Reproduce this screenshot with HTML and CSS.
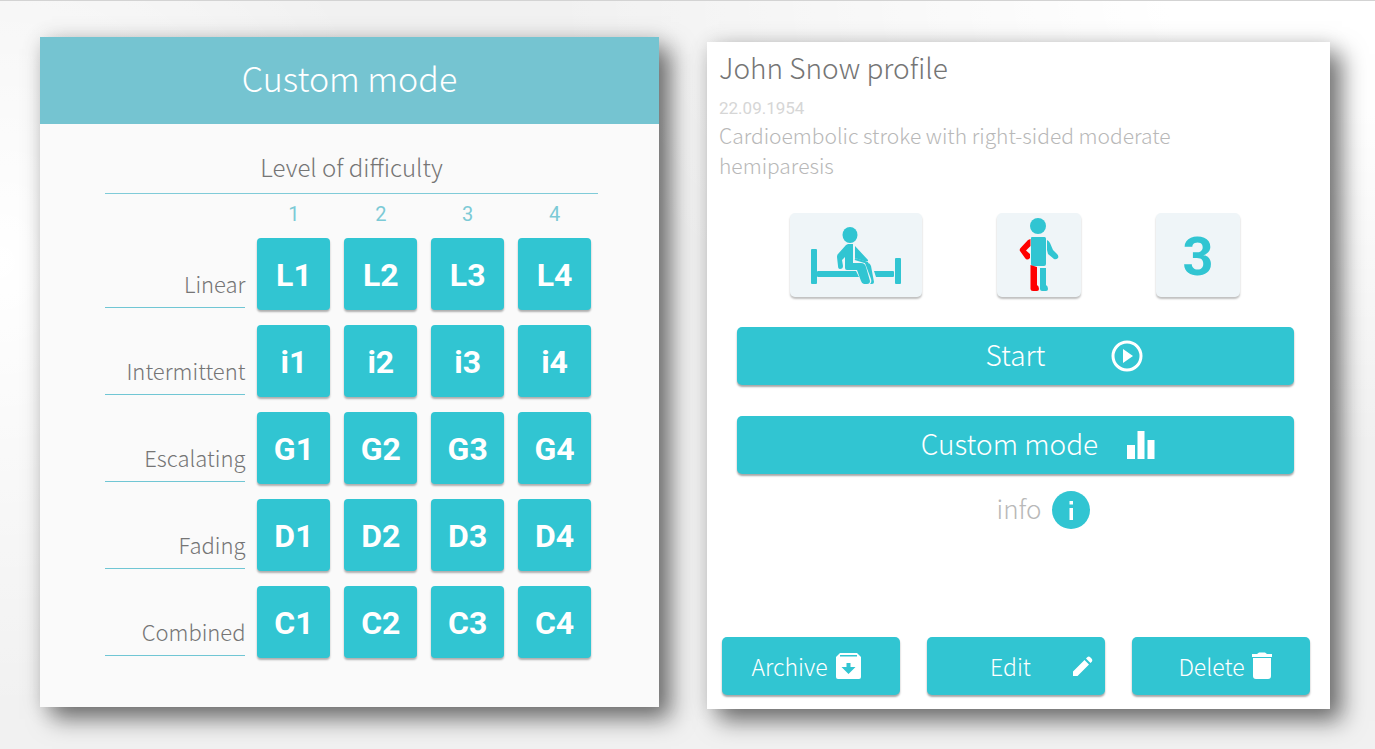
FILE: index.html
```html
<!DOCTYPE html>
<html lang="en">
<head>
<meta charset="utf-8">
<meta name="viewport" content="width=device-width, initial-scale=1">
<title>Custom mode</title>
<link rel="stylesheet" href="styles.css">
</head>
<body>
<main class="screens">
  <section class="card modes">
    <h1 class="modes-title">Custom mode</h1>
    <div class="modes-body">
      <h2 class="modes-heading">Level of difficulty</h2>
      <div class="level-grid">
        <span></span><span class="level">1</span><span class="level">2</span><span class="level">3</span><span class="level">4</span>
        <span class="mode-name">Linear</span><button class="cell">L1</button><button class="cell">L2</button><button class="cell">L3</button><button class="cell">L4</button>
        <span class="mode-name">Intermittent</span><button class="cell">i1</button><button class="cell">i2</button><button class="cell">i3</button><button class="cell">i4</button>
        <span class="mode-name">Escalating</span><button class="cell">G1</button><button class="cell">G2</button><button class="cell">G3</button><button class="cell">G4</button>
        <span class="mode-name">Fading</span><button class="cell">D1</button><button class="cell">D2</button><button class="cell">D3</button><button class="cell">D4</button>
        <span class="mode-name">Combined</span><button class="cell">C1</button><button class="cell">C2</button><button class="cell">C3</button><button class="cell">C4</button>
      </div>
    </div>
  </section>

  <section class="card profile">
    <h1 class="profile-name">John Snow profile</h1>
    <p class="birth">22.09.1954</p>
    <p class="diagnosis">Cardioembolic stroke with right-sided moderate hemiparesis</p>
    <div class="tiles">
      <div class="tile tile-wide">
        <svg width="92" height="58" viewBox="0 0 92 58" fill="#31c5d2" role="img" aria-label="Sitting on bed">
          <rect x="1" y="23" width="6" height="35" rx="1"/>
          <rect x="85" y="32" width="6" height="26" rx="1"/>
          <path d="M8 45H46L49 51H8a1 1 0 0 1-1-1V46a1 1 0 0 1 1-1zM64 45H83a1 1 0 0 1 1 1v4a1 1 0 0 1-1 1H66z"/>
          <ellipse cx="40" cy="9" rx="7.500" ry="8"/>
          <path d="M38 18H43V37H51q4 0 5 4L60 55q0 3-3 3H54q-2 0-3-3L47 44H37q-2 0-2-2V31L32 34 33 40q0 3-3 3-2 0-2-3L27 31q0-2 1-3L36 19z"/>
          <path d="M45 20L58 34V35H54L45 32zM55 37h3q2 0 3 3l3 16q0 2-2 2H60q2-2 1-5z"/>
          <path d="M45 33L58 37" fill="none" stroke="#31c5d2" stroke-width="2"/>
        </svg>
      </div>
      <div class="tile">
        <svg width="40" height="76" viewBox="0 0 40 76" fill="#31c5d2" role="img" aria-label="Right side affected">
          <ellipse cx="19" cy="9" rx="8" ry="8"/>
          <path d="M13 20H25.500q1.500 0 1.500 1.500V47q0 2-2 2H14q-2 0-2-2V21q0-1 1-1z"/>
          <path d="M28 23q2 1 3 3l3 7 4 4q2 2 1 4-2 2-4 1L29 37 28 33z"/>
          <path d="M21 51H27V68q2 1 2 4 0 2-2 2H23q-2 0-2-2z"/>
          <g fill="#f00"><path d="M11.500 22V29L7 33.500 11 37V41Q8 44 6 41L1 34q-1-1.500 1-3.500L9 23z"/><path d="M11.500 48L18 50V68q2 1 2 4 0 2-2 2H14q-2.500 0-2.500-2z"/></g>
        </svg>
      </div>
      <div class="tile tile-number">3</div>
    </div>
    <div class="actions">
      <button class="action action-start"><span class="action-label">Start</span>
        <svg width="32" height="32" viewBox="0 0 32 32" aria-hidden="true"><circle cx="16" cy="16" r="14" fill="none" stroke="#fff" stroke-width="3"/><path d="M12 9V23L22 16z" fill="#fff"/></svg>
      </button>
      <button class="action action-custom"><span class="action-label">Custom mode</span>
        <svg width="28" height="28" viewBox="0 0 28 28" fill="#fff" aria-hidden="true"><path d="M0 14h8v14H0zM10.500 0h7v28h-7zM20.500 9h7v19h-7z"/></svg>
      </button>
    </div>
    <button class="info"><span class="info-label">info</span>
      <svg width="38" height="38" viewBox="0 0 38 38" aria-hidden="true"><circle cx="19" cy="19" r="19" fill="#31c5d2"/><path d="M17.500 10h3.500v3.500h-3.500zM17.500 17h3.500v12h-3.500z" fill="#fff"/></svg>
    </button>
    <div class="footer">
      <button class="small archive">Archive
        <svg width="28" height="28" viewBox="0 0 28 28" aria-hidden="true"><path d="M5 1h17l4 4v20q0 2-2 2H3q-2 0-2-2V5z" fill="#fff"/><path d="M5 3h17v1.500H5zM11.500 11h4v4h5L13.500 22 6.500 15h5z" fill="#31c5d2"/></svg>
      </button>
      <button class="small edit"><span class="edit-label">Edit</span>
        <svg width="20" height="20" viewBox="0 0 20 20" fill="#fff" aria-hidden="true"><path d="M0 15.500L11.500 4 16 8.500 4.500 20H0zM13 2.500L14.500 1q1.500-1 3 .500l1 1q1.500 1.500.500 3L17.500 7z"/></svg>
      </button>
      <button class="small delete">Delete
        <svg width="20" height="28" viewBox="0 0 20 28" fill="#fff" aria-hidden="true"><path d="M0 2h5l2-1.500h6l2 1.500h5v3H0zM1 6h18v18q0 3-3 3H4q-3 0-3-3z"/></svg>
      </button>
    </div>
  </section>
</main>
</body>
</html>
```
FILE: styles.css
```css
* { box-sizing: border-box; }

body {
  margin: 0;
  min-height: 100vh;
  border-top: 1px solid #d3d3d3;
  background:
    radial-gradient(ellipse 30% 60% at 0 35%, #fff, rgba(255, 255, 255, 0)),
    radial-gradient(ellipse 60% 60% at 100% 0, #fff 25%, rgba(255, 255, 255, 0)),
    #f1f1f1;
  font-family: "Noto Sans CJK SC", "Open Sans", sans-serif;
  font-weight: 300;
  color: #757575;
}

h1, h2, p { margin: 0; font-weight: 300; }

button {
  border: 0;
  padding: 0;
  font: inherit;
  color: #fff;
  background: #31c5d2;
  cursor: pointer;
}

svg { display: block; flex: none; }

.screens {
  display: grid;
  grid-template-columns: 619fr 623fr;
  gap: 48px;
  align-items: start;
  padding: 36px 45px 36px 40px;
}

.card {
  box-shadow: 12px 12px 22px rgba(0, 0, 0, 0.5), 2px 2px 20px rgba(0, 0, 0, 0.15);
}

.modes { background: #fafafa; padding-bottom: 49px; }

.modes-title {
  padding: 15px 0 20px;
  background: #75c4d1;
  color: #fff;
  font-size: 34px;
  line-height: 52px;
  text-align: center;
}

.modes-body { padding: 25px 61px 0 65px; }

.modes-heading {
  padding-bottom: 8px;
  border-bottom: 1px solid #7fcbd8;
  font-size: 24px;
  line-height: 36px;
  text-align: center;
}

.level-grid {
  display: grid;
  grid-template-columns: minmax(0, 19fr) repeat(4, minmax(0, 10fr));
  column-gap: 14px;
  row-gap: 15px;
  padding: 8px 7px 0 0;
}

.level {
  height: 21px;
  font: 400 20px/24px Roboto, sans-serif;
  color: #7ccad6;
  text-align: center;
}

.mode-name {
  align-self: end;
  margin-right: -2px;
  margin-bottom: 2px;
  padding-bottom: 8px;
  border-bottom: 1px solid #70c6d4;
  font-size: 22px;
  line-height: 32px;
  text-align: right;
}

.cell {
  height: 72px;
  padding-top: 2px;
  border-radius: 4px;
  box-shadow: 0 2px 2px rgba(0, 0, 0, 0.3);
  font: 700 32px/70px Roboto, sans-serif;
}

.profile {
  display: flex;
  flex-direction: column;
  margin-top: 5px;
  padding: 2px 20px 14px 15px;
  background: #fff;
}

.profile-name { margin-left: -3px; font-size: 28px; line-height: 46px; }

.birth {
  margin: 6px 0 0 -3px;
  font: 400 17px/24px Roboto, sans-serif;
  color: #d6d6d6;
}

.diagnosis {
  max-width: 500px;
  margin-left: -3px;
  font-size: 21px;
  line-height: 30px;
  color: #b8b8b8;
}

.tiles {
  display: flex;
  justify-content: space-between;
  margin: 33px 70px 0 68px;
}

.tile {
  display: flex;
  align-items: center;
  justify-content: center;
  width: 84px;
  height: 84px;
  border-radius: 5px;
  background: #eff5f8;
  box-shadow: 0 2px 2px rgba(0, 0, 0, 0.25);
}

.tile-wide { width: 132px; }

.tile-number {
  padding-top: 3px;
  color: #31c5d2;
  font: 700 54px/81px Roboto, sans-serif;
}

.actions {
  display: grid;
  gap: 31px;
  margin: 30px 16px 0 15px;
}

.action, .small {
  height: 58px;
  border-radius: 5px;
  box-shadow: 0 2px 2px rgba(0, 0, 0, 0.35);
}

.action {
  display: grid;
  grid-template-columns: 1fr auto 1fr;
  align-items: center;
  font-size: 28px;
}

.action-label { grid-column: 2; padding-bottom: 4px; }
.action-start svg { margin-left: 66px; }
.action-custom { padding-right: 12px; }
.action-custom svg { margin-left: 29px; }

.info {
  display: flex;
  align-items: center;
  align-self: center;
  gap: 11px;
  margin: 17px 0 108px 55px;
  background: none;
  color: #b8b8b8;
  font-size: 26px;
  line-height: 34px;
}

.info-label { padding-bottom: 4px; }

.footer {
  display: grid;
  grid-template-columns: repeat(3, 1fr);
  gap: 27px;
}

.small {
  display: flex;
  align-items: center;
  justify-content: center;
  gap: 7px;
  font-size: 23px;
}

.archive { padding-right: 8px; }
.edit { padding: 0 12px; }
.edit-label { flex: 1; padding-left: 16px; }
.delete { padding-left: 8px; }
```
